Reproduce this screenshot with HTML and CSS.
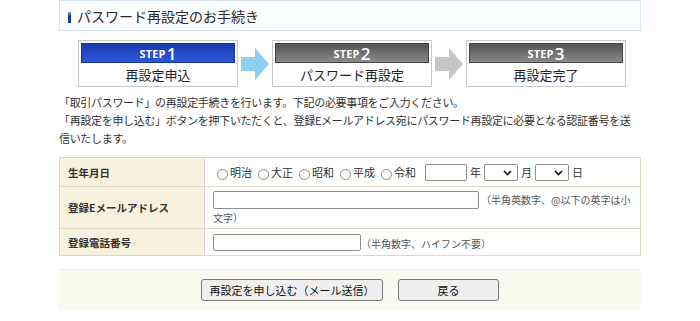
FILE: index.html
```html
<!DOCTYPE html>
<html lang="ja">
<head>
<meta charset="utf-8">
<title>パスワード再設定のお手続き</title>
<link rel="stylesheet" href="styles.css">
</head>
<body>
<div class="page">
  <div class="title"><span class="title-mark"></span><h1>パスワード再設定のお手続き</h1></div>

  <ol class="steps">
    <li class="step current"><div class="step-head">STEP<b>1</b></div><div class="step-label">再設定申込</div></li>
    <li class="arrow"><svg width="28" height="32" viewBox="0 0 28 32"><path d="M0 9H14V0L28 16L14 32V23H0Z" fill="#8fd0f2"/></svg></li>
    <li class="step"><div class="step-head">STEP<b>2</b></div><div class="step-label">パスワード再設定</div></li>
    <li class="arrow"><svg width="28" height="32" viewBox="0 0 28 32"><path d="M0 9H14V0L28 16L14 32V23H0Z" fill="#c6c6c6"/></svg></li>
    <li class="step"><div class="step-head">STEP<b>3</b></div><div class="step-label">再設定完了</div></li>
  </ol>

  <p class="intro">「取引パスワード」の再設定手続きを行います。下記の必要事項をご入力ください。<br>「再設定を申し込む」ボタンを押下いただくと、登録Eメールアドレス宛にパスワード再設定に必要となる認証番号を送信いたします。</p>

  <table class="form">
    <tr class="r1">
      <th>生年月日</th>
      <td>
        <div class="dob">
          <label class="era"><input type="radio" name="era"><span>明治</span></label>
          <label class="era"><input type="radio" name="era"><span>大正</span></label>
          <label class="era"><input type="radio" name="era"><span>昭和</span></label>
          <label class="era"><input type="radio" name="era"><span>平成</span></label>
          <label class="era"><input type="radio" name="era"><span>令和</span></label>
          <input class="text year" type="text"><span class="unit">年</span>
          <span class="sel"><select><option></option></select><svg width="9" height="6" viewBox="0 0 9 6"><path d="M1 1L4.5 4.5L8 1" fill="none" stroke="#111" stroke-width="1.7"/></svg></span><span class="unit">月</span>
          <span class="sel"><select><option></option></select><svg width="9" height="6" viewBox="0 0 9 6"><path d="M1 1L4.5 4.5L8 1" fill="none" stroke="#111" stroke-width="1.7"/></svg></span><span class="unit">日</span>
        </div>
      </td>
    </tr>
    <tr class="r2">
      <th>登録Eメールアドレス</th>
      <td><input class="text email" type="text"><span class="note gap">（半角英数字、@以下の英字は小文字）</span></td>
    </tr>
    <tr class="r3">
      <th>登録電話番号</th>
      <td><input class="text tel" type="text"><span class="note">（半角数字、ハイフン不要）</span></td>
    </tr>
  </table>

  <div class="actions">
    <button class="btn wide" type="button">再設定を申し込む（メール送信）</button>
    <button class="btn narrow" type="button">戻る</button>
  </div>
</div>
</body>
</html>
```

FILE: styles.css
```css
body {
  margin: 0;
  font-family: "Noto Sans CJK JP", "Noto Sans", sans-serif;
  color: #333;
  background: #fff;
}

.page {
  width: 582px;
  margin-left: 59px;
}

.title {
  display: flex;
  align-items: center;
  height: 31px;
  box-sizing: border-box;
  border: 1px solid #d8e4f1;
  background: #fbfdff;
  padding-left: 8px;
}

.title-mark {
  width: 3px;
  height: 11px;
  margin-top: 4px;
  margin-right: 6px;
  background: linear-gradient(#79a6de, #0f3f8f 40%);
}

.title h1 {
  margin: 0;
  font-size: 14px;
  font-weight: normal;
  color: #2a2a2a;
  line-height: 1;
}

.steps {
  list-style: none;
  margin: 9px 0 0;
  padding: 0 0 0 19px;
  display: flex;
  align-items: center;
}

.step {
  width: 160px;
  box-sizing: border-box;
  border: 1px solid #c9c9c9;
  padding: 2px 2px 1px;
  background: #fff;
}

.step-head {
  height: 20px;
  box-sizing: border-box;
  border: 1px solid #454545;
  background: linear-gradient(#555, #8a8a8a);
  color: #fff;
  font-family: "Open Sans", "Noto Sans", sans-serif;
  font-weight: 700;
  font-size: 11px;
  letter-spacing: 0.2px;
  display: flex;
  align-items: center;
  justify-content: center;
  line-height: 1;
}

.step-head b {
  font-size: 17px;
  font-weight: 600;
  margin-left: 1px;
}

.step.current .step-head {
  border-color: #16349c;
  background: linear-gradient(#1a3bb2, #2c58d5);
}

.step-label {
  height: 22px;
  display: flex;
  align-items: center;
  justify-content: center;
  font-size: 13px;
  color: #222;
}

.arrow {
  width: 34px;
  display: flex;
  justify-content: center;
}

.intro {
  margin: 6px 0 0;
  font-size: 11px;
  line-height: 18px;
  letter-spacing: -0.32px;
  color: #333;
}

.form {
  margin-top: 10px;
  width: 582px;
  border-collapse: collapse;
}

.form th,
.form td {
  border: 1px solid #ddd9c5;
  font-size: 11px;
}

.form th {
  width: 128px;
  padding: 0 8px;
  text-align: left;
  background: #f6f2de;
  font-weight: bold;
  font-size: 10.5px;
  color: #333;
}

.form td {
  padding: 0 8px;
  background: #fff;
}

.r1 th { height: 28px; }
.r2 th { height: 41px; }
.r3 th { height: 26px; }

.r2 td {
  line-height: 14px;
  padding-top: 1px;
}

.dob {
  display: flex;
  align-items: center;
}

.era {
  display: inline-flex;
  align-items: center;
  margin-right: 6px;
  font-size: 11px;
  color: #333;
}

.era:first-child {
  margin-left: 4px;
}

.era input {
  appearance: none;
  -webkit-appearance: none;
  width: 11px;
  height: 11px;
  margin: 4px 2px 0 0;
  border: 1px solid #8a8a8a;
  border-radius: 50%;
  background: #fff;
}

.text {
  height: 18px;
  box-sizing: border-box;
  border: 1px solid #8f8f8f;
  border-radius: 2px;
  padding: 0 3px;
  vertical-align: middle;
  background: #fff;
}

.year {
  width: 42px;
  height: 17px;
  margin-left: 3px;
}

.email { width: 266px; }
.tel { width: 148px; height: 17px; }

.unit {
  font-size: 11px;
  margin: 0 3px;
  color: #333;
}

.sel {
  position: relative;
  display: inline-block;
  height: 17px;
}

.sel select {
  appearance: none;
  -webkit-appearance: none;
  width: 34px;
  height: 17px;
  box-sizing: border-box;
  border: 1px solid #8f8f8f;
  border-radius: 2px;
  background: #fff;
  display: block;
}

.sel svg {
  position: absolute;
  right: 6px;
  top: 6px;
}

.note {
  font-size: 10px;
  color: #555;
  vertical-align: middle;
}

.note.gap {
  margin-left: 2px;
}

.actions {
  margin-top: 13px;
  display: flex;
  justify-content: center;
  gap: 15px;
  padding: 9px 0;
  background: #fbfaee;
  border-top: 1px solid #efebd0;
}

.btn {
  height: 22px;
  box-sizing: border-box;
  border: 1px solid #7a7a7a;
  border-radius: 3px;
  background: #efefef;
  font-family: "Noto Sans CJK JP", sans-serif;
  font-size: 11px;
  color: #111;
  padding: 0;
}

.btn.wide { width: 182px; }
.btn.narrow { width: 101px; }
```
